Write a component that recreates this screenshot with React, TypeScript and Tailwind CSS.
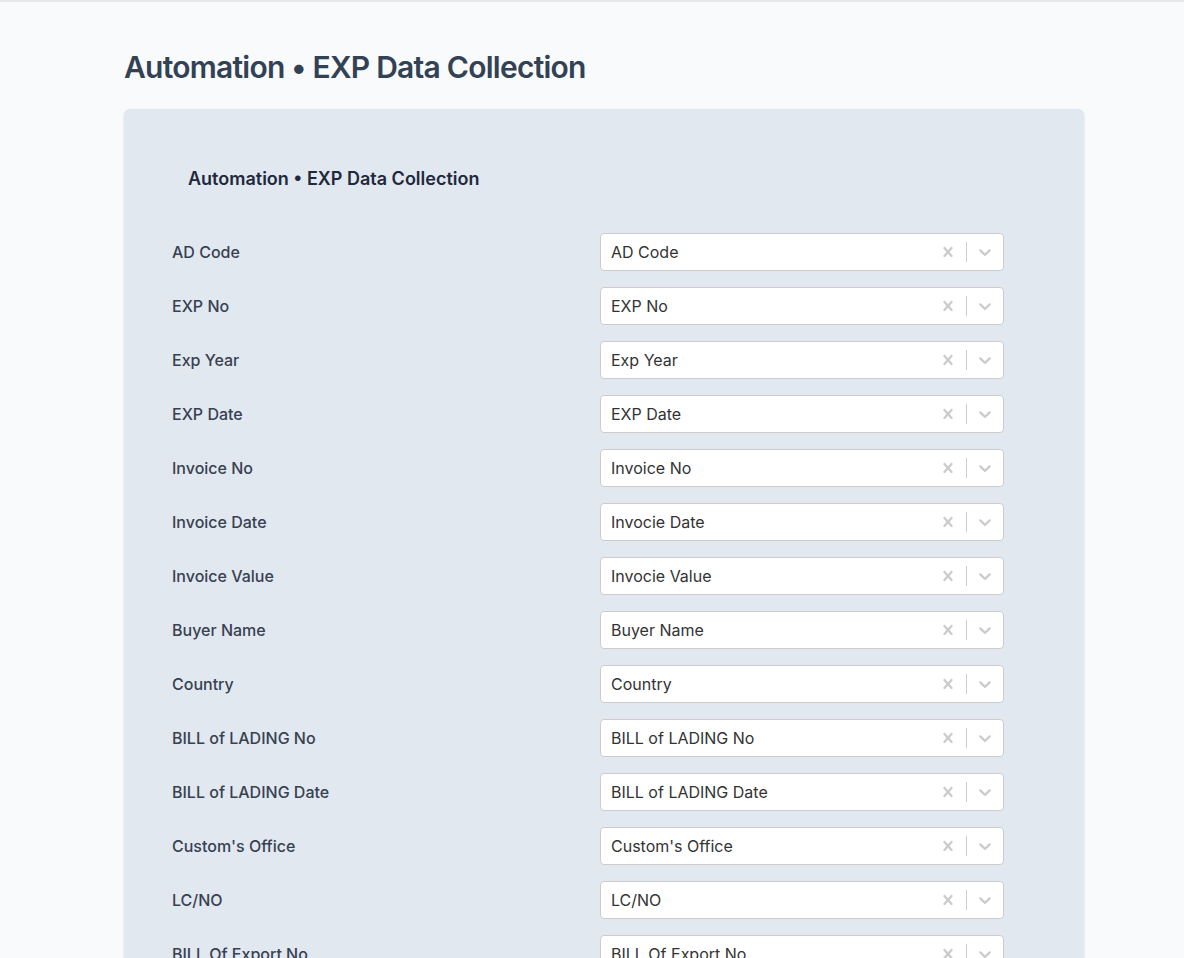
const fields: [string, string][] = [
  ["AD Code", "AD Code"],
  ["EXP No", "EXP No"],
  ["Exp Year", "Exp Year"],
  ["EXP Date", "EXP Date"],
  ["Invoice No", "Invoice No"],
  ["Invoice Date", "Invocie Date"],
  ["Invoice Value", "Invocie Value"],
  ["Buyer Name", "Buyer Name"],
  ["Country", "Country"],
  ["BILL of LADING No", "BILL of LADING No"],
  ["BILL of LADING Date", "BILL of LADING Date"],
  ["Custom's Office", "Custom's Office"],
  ["LC/NO", "LC/NO"],
  ["BILL Of Export No", "BILL Of Export No"],
  ["BILL Of Export Date", "BILL Of Export Date"],
];

function SelectBox({ value }: { value: string }) {
  return (
    <div className="flex h-[38px] w-[404px] items-center rounded border border-[#cccccc] bg-white">
      <div className="flex-1 px-2 py-0.5">
        <span className="mx-0.5 text-[#333333]">{value}</span>
      </div>
      <div className="flex items-center self-stretch">
        <div className="p-2 text-[#cccccc]">
          <svg width="20" height="20" viewBox="0 0 20 20" fill="currentColor">
            <path d="M14.348 14.849c-0.469 0.469-1.229 0.469-1.697 0l-2.651-3.030-2.651 3.029c-0.469 0.469-1.229 0.469-1.697 0-0.469-0.469-0.469-1.229 0-1.697l2.758-3.15-2.759-3.152c-0.469-0.469-0.469-1.228 0-1.697s1.228-0.469 1.697 0l2.652 3.031 2.651-3.031c0.469-0.469 1.228-0.469 1.697 0s0.469 1.229 0 1.697l-2.758 3.152 2.758 3.15c0.469 0.469 0.469 1.229 0 1.698z" />
          </svg>
        </div>
        <span className="my-2 w-px self-stretch bg-[#cccccc]" />
        <div className="p-2 text-[#cccccc]">
          <svg width="20" height="20" viewBox="0 0 20 20" fill="currentColor">
            <path d="M4.516 7.548c0.436-0.446 1.043-0.481 1.576 0l3.908 3.747 3.908-3.747c0.533-0.481 1.141-0.446 1.574 0 0.436 0.445 0.408 1.197 0 1.615-0.406 0.418-4.695 4.502-4.695 4.502-0.217 0.223-0.502 0.335-0.787 0.335s-0.57-0.112-0.789-0.335c0 0-4.287-4.084-4.695-4.502s-0.436-1.17 0-1.615z" />
          </svg>
        </div>
      </div>
    </div>
  );
}

export default function App() {
  return (
    <div className="min-h-screen border-t-2 border-[#e5e7eb] bg-[#f8fafc] font-['Inter',sans-serif]">
      <div className="ml-[124px] w-[960px] pt-[45px]">
        <h1 className="text-[30px] font-semibold leading-[40px] tracking-tight text-[#334155]">
          Automation • EXP Data Collection
        </h1>
        <div className="mt-[22px] rounded-md bg-[#e2e8f0] px-12 pb-12 pt-[58px] shadow-sm">
          <h2 className="pl-4 text-lg font-semibold leading-6 text-[#1e293b]">
            Automation • EXP Data Collection
          </h2>
          <div className="mt-[42px] flex flex-col gap-4">
            {fields.map(([label, value]) => (
              <div key={label} className="flex items-center">
                <label className="w-[428px] font-medium text-[#374151]">{label}</label>
                <SelectBox value={value} />
              </div>
            ))}
          </div>
        </div>
      </div>
    </div>
  );
}
